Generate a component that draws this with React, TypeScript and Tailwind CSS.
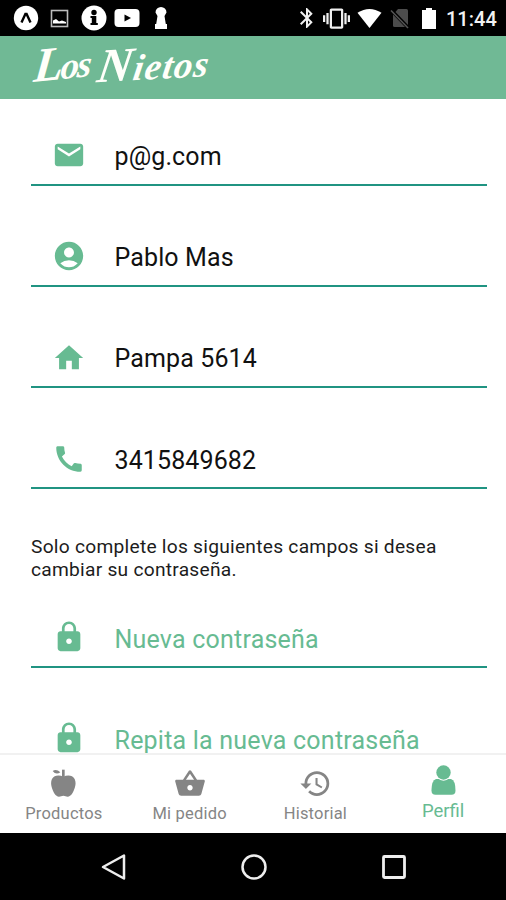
import type { ReactNode } from 'react'
import { IoMdBasket } from 'react-icons/io'
import { MdAccountCircle, MdBluetooth, MdCall, MdEmail, MdHistory, MdHome, MdLock, MdVibration } from 'react-icons/md'

function StatusBar() {
  return (
    <div className="flex h-9 shrink-0 items-center justify-between bg-black pl-[13px] pr-[10px] text-white">
      <div className="flex items-center">
        <svg className="h-[26px] w-[26px]" viewBox="0 0 26 26">
          <circle cx="13" cy="13" r="12.2" fill="#fff" />
          <path d="M8.500 17.500 12.400 9h1.200l3.900 8.500" fill="none" stroke="#000" strokeWidth="2.400" />
        </svg>
        <svg className="ml-[11px] h-[19px] w-[19px]" viewBox="0 0 19 19">
          <rect x="1.5" y="1.5" width="16" height="16" fill="none" stroke="#bbb" strokeWidth="1.6" />
          <path d="M3 14.500v-3l3-1.500 3 2.500 3-1 4 1.500v1.500z" fill="#fff" />
        </svg>
        <svg className="ml-[12px] h-[26px] w-[26px]" viewBox="0 0 26 26">
          <circle cx="13" cy="13" r="12.500" fill="#fff" />
          <circle cx="13" cy="7.500" r="2.700" />
          <path d="M9.500 11h5.800v7h1.500v2H9.500v-2h1.300v-5H9.500z" />
        </svg>
        <svg className="ml-[7px] h-[18px] w-[26px]" viewBox="0 0 26 18">
          <rect x="0.500" y="0" width="25" height="18" rx="4" fill="#fff" />
          <path d="M10.500 5.500v7l6.500-3.500z" />
        </svg>
        <svg className="ml-[14px] h-[24px] w-[14px]" viewBox="0 0 14 24">
          <path d="M7 1a5.500 5.500 0 0 1 5.500 5.500L10.500 10l1.300 8H13v5H1v-5h1.200l1.300-8-2-3.500A5.500 5.500 0 0 1 7 1z" fill="#fff" />
        </svg>
      </div>
      <div className="flex items-center">
        <MdBluetooth className="h-6 w-6 text-[#f0f0f0]" />
        <MdVibration className="ml-[4px] h-[27px] w-[27px] text-[#f0f0f0]" />
        <svg className="ml-[7px] h-[21px] w-[25px]" viewBox="0 0 26 21">
          <path d="M0.500 4.500Q13-3.500 25.500 4.500L13 20.500z" fill="#fff" />
        </svg>
        <svg className="ml-[8px] h-[21px] w-[20px]" viewBox="0 0 20 21">
          <path d="M8 1h8.500Q18 1 18 2.500V17L5.500 4z" fill="#4c4c4c" />
          <path d="M3 6.500 15 19H4.500Q3 19 3 17.500z" fill="#4c4c4c" />
          <path d="M1 2.500 18 20" stroke="#555" strokeWidth="1.500" />
        </svg>
        <svg className="ml-[12px] h-[21px] w-[14px]" viewBox="0 0 14 21">
          <path d="M4 0h6v2h4v19H0V2h4z" fill="#fff" />
        </svg>
        <span className="ml-[10px] w-[50px] whitespace-nowrap pt-px text-[20px] font-medium leading-9 text-[#f2f2f2]">11:44</span>
      </div>
    </div>
  )
}

function Logo() {
  return (
    <h1 className="flex gap-[11px] whitespace-nowrap font-['Liberation_Serif',cursive] text-[37px] font-bold italic leading-[54px] text-[#fffffa]">
      <span className="w-[53px] -rotate-6 -skew-x-12 tracking-[-2px]">
        <span className="text-[48px]">L</span>os
      </span>
      <span className="w-[116px] -rotate-3 -skew-x-12 tracking-[1.300px]">
        <span className="text-[48px]">N</span>ietos
      </span>
    </h1>
  )
}

function Field({ icon, children, placeholder }: { icon: ReactNode; children: ReactNode; placeholder?: boolean }) {
  return (
    <div className="mb-[45.300px] flex h-14 shrink-0 items-center border-b-2 border-[#209482]">
      <div className="flex w-[76px] justify-center pb-[3px] text-[34px] text-[#67bb92]">{icon}</div>
      <span
        className={`ml-[7.500px] whitespace-nowrap text-[25px] ${placeholder ? 'pt-0.5 tracking-[0.220px] text-[#67bb92]' : 'tracking-[0.120px] text-[#111]'}`}
      >
        {children}
      </span>
    </div>
  )
}

function AppleIcon() {
  return (
    <svg className="h-[28px] w-[25px]" viewBox="154 60 75 84" fill="currentColor">
      <path d="M159 66q11-8 23 4-13 9-23-4z" />
      <path d="M187 62h8v24h-8z" />
      <path d="M191 83c8-4 19-5 26-1 10 5 13 19 9 32-4 15-12 29-22 29-5 0-8-3-13-3s-8 3-13 3c-10 0-18-14-22-29-4-13-1-27 9-32 7-4 18-3 26 1z" />
    </svg>
  )
}

function PersonIcon() {
  return (
    <svg className="h-[30px] w-[25px]" viewBox="0 0 25 30" fill="currentColor">
      <path d="M5 14h15q4.500 1.500 4.500 11.500 0 4.300-4 4.300h-16q-4 0-4-4.300Q.5 15.500 5 14z" />
      <circle cx="12.500" cy="7.600" r="8.100" fill="#fff" />
      <circle cx="12.500" cy="7.500" r="7.200" />
    </svg>
  )
}

function Tab({ icon, label, active }: { icon: ReactNode; label: string; active?: boolean }) {
  return (
    <div className={`flex flex-1 flex-col items-center ${active ? 'pl-0.5 pt-[10px] text-[#67bb92]' : 'pt-[13px] text-[#858585]'}`}>
      <div className="flex h-[30px] items-center">{icon}</div>
      <span className={`whitespace-nowrap ${active ? 'text-[18.500px] leading-[33px]' : 'text-[16.500px] leading-[31px] tracking-[0.200px]'}`}>
        {label}
      </span>
    </div>
  )
}

export default function App() {
  return (
    <div className="flex h-[900px] w-[506px] flex-col overflow-hidden bg-white font-['Roboto','Noto_Sans',sans-serif]">
      <StatusBar />

      <header className="flex h-[62.500px] shrink-0 items-start bg-[#70b995] pl-[34px]">
        <Logo />
      </header>

      {/* Profile form */}
      <main className="flex min-h-0 flex-1 flex-col overflow-hidden pl-[31px] pr-[19px] pt-[31px]">
        <Field icon={<MdEmail />}>p@g.com</Field>
        <Field icon={<MdAccountCircle />}>Pablo Mas</Field>
        <Field icon={<MdHome />}>Pampa 5614</Field>
        <Field icon={<MdCall />}>3415849682</Field>
        <p className="mb-[30px] text-[19.200px] leading-[23.500px] tracking-[0.250px] text-[#1c1c1c]">
          Solo complete los siguientes campos si desea
          <br />
          cambiar su contraseña.
        </p>
        <Field icon={<MdLock />} placeholder>Nueva contraseña</Field>
        <Field icon={<MdLock />} placeholder>Repita la nueva contraseña</Field>
      </main>

      {/* Bottom tabs */}
      <nav className="flex h-[80px] shrink-0 border-t-2 border-[#f1f1f1] bg-white pl-px">
        <Tab icon={<AppleIcon />} label="Productos" />
        <Tab icon={<IoMdBasket className="h-[34px] w-[34px]" />} label="Mi pedido" />
        <Tab icon={<MdHistory className="h-[33px] w-[33px]" />} label="Historial" />
        <Tab icon={<PersonIcon />} label="Perfil" active />
      </nav>

      {/* Android navigation */}
      <div className="flex h-[67px] shrink-0 items-center justify-center gap-[112px] bg-black pl-px">
        <svg className="h-7 w-7" viewBox="0 0 28 28" fill="none" stroke="#eee" strokeWidth="2.500">
          <path d="M3 14 24 2.500v23z" strokeLinejoin="round" />
        </svg>
        <svg className="h-7 w-7" viewBox="0 0 28 28" fill="none" stroke="#eee" strokeWidth="2.500">
          <circle cx="14" cy="14" r="11.500" />
        </svg>
        <svg className="h-7 w-7" viewBox="0 0 28 28" fill="none" stroke="#eee" strokeWidth="2.800">
          <rect x="3.500" y="3.500" width="21" height="21" rx="1" />
        </svg>
      </div>
    </div>
  )
}
